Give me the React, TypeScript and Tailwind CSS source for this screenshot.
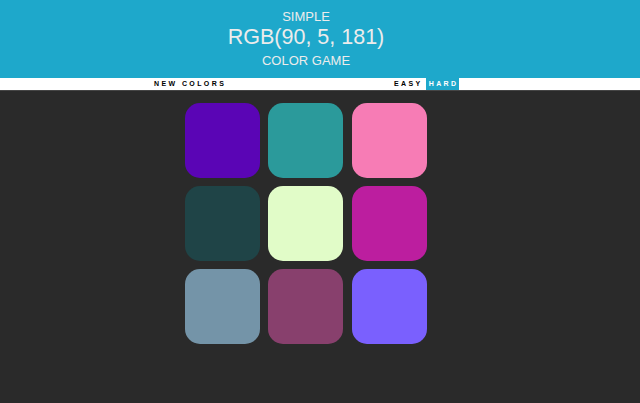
const squares = [
  "#5a05b5",
  "#2b9a9b",
  "#f77cb5",
  "#1f4447",
  "#e1fcc8",
  "#bc1e9f",
  "#7494a8",
  "#88406d",
  "#7a60fe",
];

export default function App() {
  return (
    <div
      className="min-h-[403px] w-[640px] bg-[#2a2a2a]"
      style={{ fontFamily: '"Liberation Sans", Arial, sans-serif' }}
    >
      <header className="flex h-[78px] flex-col items-center bg-[#1ea8cb] pr-[28px] pt-[10px] uppercase text-[#ececec]">
        <h1 className="text-[13px] font-normal leading-[13px]">Simple</h1>
        <h2 className="mt-[4px] text-[21.5px] font-normal leading-[21px]">RGB(90, 5, 181)</h2>
        <h3 className="mt-[6px] text-[13px] font-normal leading-[13px]">Color Game</h3>
      </header>

      <nav className="flex h-[13px] items-stretch whitespace-nowrap border-b-[1px] border-[#454545] bg-white text-[7px] font-bold tracking-[2.4px] text-black">
        <button className="ml-[154px] w-[72px] text-left uppercase leading-[12px]">New Colors</button>
        <button className="ml-[168px] uppercase leading-[12px]">Easy</button>
        <button className="ml-[3px] w-[33px] bg-[#1ea8cb] pl-[3px] text-left uppercase leading-[12px] text-white">
          Hard
        </button>
      </nav>

      <div className="ml-[185px] mt-[12px] grid w-[242px] grid-cols-3 gap-[8px]">
        {squares.map((c) => (
          <div key={c} className="h-[75px] w-[75px] rounded-[15px]" style={{ backgroundColor: c }} />
        ))}
      </div>
    </div>
  );
}
